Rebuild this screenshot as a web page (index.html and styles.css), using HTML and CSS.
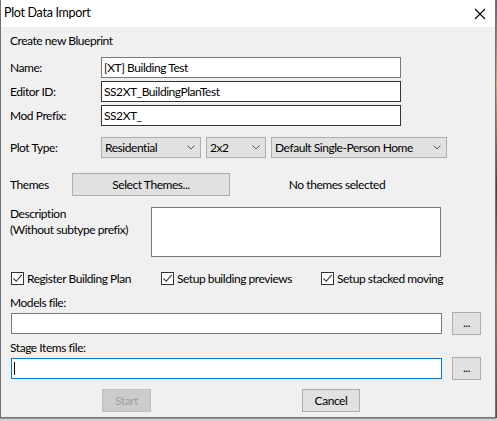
FILE: index.html
```html
<!DOCTYPE html>
<html>
<head>
<meta charset="utf-8">
<link rel="stylesheet" href="styles.css">
</head>
<body>
<div class="desk">
  <div class="window">
    <div class="titlebar">
      <span class="title">Plot Data Import</span>
      <svg class="close" width="12" height="12" viewBox="0 0 12 12"><path d="M1 1L11 11M11 1L1 11" stroke="#000" stroke-width="1.1" fill="none"/></svg>
    </div>
    <div class="content">
      <div class="heading">Create new Blueprint</div>
      <div class="fields">
        <span class="label">Name:</span><div class="input grey">[XT] Building Test</div>
        <span class="label">Editor ID:</span><div class="input dark">SS2XT_BuildingPlanTest</div>
        <span class="label">Mod Prefix:</span><div class="input dark">SS2XT_</div>
      </div>
      <div class="plot-row">
        <span class="label plot-label">Plot Type:</span>
        <div class="select s1"><span>Residential</span><svg class="chev" width="8" height="5" viewBox="0 0 8 5"><path d="M0.5 0.5L4 4L7.5 0.5" stroke="#555" fill="none"/></svg></div>
        <div class="select s2"><span>2x2</span><svg class="chev" width="8" height="5" viewBox="0 0 8 5"><path d="M0.5 0.5L4 4L7.5 0.5" stroke="#555" fill="none"/></svg></div>
        <div class="select s3"><span>Default Single-Person Home</span><svg class="chev" width="8" height="5" viewBox="0 0 8 5"><path d="M0.5 0.5L4 4L7.5 0.5" stroke="#555" fill="none"/></svg></div>
      </div>
      <div class="themes-row">
        <span class="label themes-label">Themes</span>
        <div class="button themes-btn">Select Themes...</div>
        <span class="no-themes">No themes selected</span>
      </div>
      <div class="desc-row">
        <span class="label desc-label">Description<br>(Without subtype prefix)</span>
        <div class="textarea"></div>
      </div>
      <div class="checks">
        <div class="check c1"><span class="box"><svg width="11" height="11" viewBox="0 0 11 11"><path d="M1.5 5.5L4.2 8.3L9.8 1.8" stroke="#333" stroke-width="1.1" fill="none"/></svg></span><span>Register Building Plan</span></div>
        <div class="check c2"><span class="box"><svg width="11" height="11" viewBox="0 0 11 11"><path d="M1.5 5.5L4.2 8.3L9.8 1.8" stroke="#333" stroke-width="1.1" fill="none"/></svg></span><span>Setup building previews</span></div>
        <div class="check c3"><span class="box"><svg width="11" height="11" viewBox="0 0 11 11"><path d="M1.5 5.5L4.2 8.3L9.8 1.8" stroke="#333" stroke-width="1.1" fill="none"/></svg></span><span>Setup stacked moving</span></div>
      </div>
      <div class="file-label models-label">Models file:</div>
      <div class="file-row">
        <div class="input grey file-input"></div>
        <div class="button browse">...</div>
      </div>
      <div class="file-label stage-label">Stage Items file:</div>
      <div class="file-row">
        <div class="input focus file-input"><span class="caret"></span></div>
        <div class="button browse">...</div>
      </div>
      <div class="actions">
        <div class="button disabled start">Start</div>
        <div class="button cancel">Cancel</div>
      </div>
    </div>
  </div>
  <div class="side"></div>
</div>
</body>
</html>
```

FILE: styles.css
```css
html, body {
  margin: 0;
  padding: 0;
}
body {
  background: #d4d4d4;
  font-family: Lato, "Noto Sans", sans-serif;
  font-size: 12px;
  letter-spacing: -0.45px;
  color: #000;
  width: 497px;
  height: 421px;
  overflow: hidden;
}
.desk {
  display: flex;
  align-items: flex-start;
}
.window {
  width: 496px;
  height: 418px;
  box-sizing: border-box;
  border: 1px solid #707070;
  border-top: none;
  background: #f0f0f0;
  box-shadow: 0 1px 1px #9a9a9a;
  display: flex;
  flex-direction: column;
}
.side {
  width: 1px;
  height: 418px;
  background: linear-gradient(#6a5a8a, #c8b060 20%, #404040 45%, #a08050 70%, #505050);
}
.titlebar {
  height: 27px;
  background: #fff;
  display: flex;
  align-items: center;
  justify-content: space-between;
  padding: 0 9px 0 3px;
}
.title {
  line-height: 16px;
  margin-top: -1px;
  font-size: 12.5px;
  letter-spacing: -0.3px;
}
.close {
  display: block;
}
.content {
  padding: 0 0 0 9px;
  display: flex;
  flex-direction: column;
}
.heading {
  margin-top: 6px;
  line-height: 15px;
  height: 15px;
}
.label {
  line-height: 15px;
  white-space: nowrap;
}
.fields {
  margin-top: 9px;
  display: grid;
  grid-template-columns: 91px 300px;
  grid-auto-rows: 21px;
  row-gap: 3px;
  align-items: center;
}
.input {
  box-sizing: border-box;
  height: 21px;
  background: #fff;
  border: 1px solid #7a7a7a;
  padding: 0 2px;
  line-height: 19px;
  white-space: nowrap;
  overflow: hidden;
}
.input.dark {
  border-color: #333;
}
.input.focus {
  border-color: #0078d7;
  position: relative;
}
.caret {
  position: absolute;
  left: 2px;
  top: 3px;
  width: 1px;
  height: 13px;
  background: #000;
}
.plot-row {
  margin-top: 11px;
  display: flex;
  align-items: center;
  height: 21px;
}
.plot-label {
  width: 91px;
}
.select {
  box-sizing: border-box;
  height: 21px;
  background: #e1e1e1;
  border: 1px solid #adadad;
  display: flex;
  align-items: center;
  justify-content: space-between;
  padding: 0 5px 0 3px;
  line-height: 19px;
  white-space: nowrap;
}
.s1 { width: 100px; }
.s2 { width: 60px; margin-left: 5px; }
.s3 { width: 176px; margin-left: 5px; }
.chev { display: block; }
.themes-row {
  margin-top: 15px;
  display: flex;
  align-items: center;
  height: 23px;
}
.themes-label {
  width: 62px;
}
.button {
  box-sizing: border-box;
  height: 23px;
  background: #e1e1e1;
  border: 1px solid #adadad;
  display: flex;
  align-items: center;
  justify-content: center;
  line-height: 15px;
  white-space: nowrap;
}
.themes-btn {
  width: 158px;
}
.no-themes {
  margin-left: 33px;
  width: 148px;
  text-align: center;
  white-space: nowrap;
}
.desc-row {
  margin-top: 11px;
  display: flex;
  height: 50px;
}
.desc-label {
  width: 141px;
  margin-top: -1px;
  line-height: 16px;
}
.textarea {
  box-sizing: border-box;
  width: 290px;
  height: 50px;
  background: #fff;
  border: 1px solid #7a7a7a;
}
.checks {
  margin-top: 14px;
  display: flex;
  height: 15px;
  align-items: center;
}
.check {
  display: flex;
  align-items: center;
  line-height: 15px;
  white-space: nowrap;
}
.c1 { margin-left: 1px; width: 150px; }
.c2 { width: 160px; }
.box {
  box-sizing: border-box;
  width: 13px;
  height: 13px;
  border: 1px solid #333;
  background: #fff;
  margin-right: 3px;
  display: flex;
  align-items: center;
  justify-content: center;
}
.box svg { display: block; }
.file-label {
  line-height: 15px;
  height: 15px;
}
.models-label { margin-top: 9px; }
.stage-label { margin-top: 5px; }
.file-row {
  margin-top: 2px;
  display: flex;
  align-items: center;
  height: 23px;
}
.file-input {
  margin-left: 1px;
  width: 431px;
}
.browse {
  width: 29px;
  margin-left: 10px;
  padding-bottom: 3px;
}
.actions {
  margin-top: 9px;
  display: flex;
  height: 23px;
}
.start {
  margin-left: 92px;
  width: 49px;
}
.disabled {
  background: #cccccc;
  border-color: #bfbfbf;
  color: #a0a0a0;
}
.cancel {
  margin-left: 151px;
  width: 58px;
}
```
